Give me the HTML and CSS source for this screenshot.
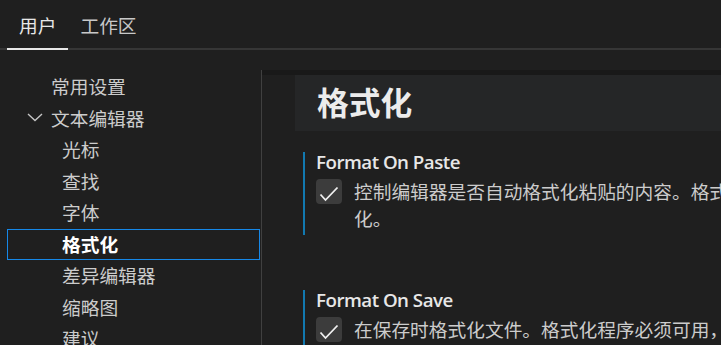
FILE: index.html
```html
<!DOCTYPE html>
<html>

<head>
  <meta charset="utf-8">
  <title>设置</title>
  <link rel="stylesheet" href="styles.css">
</head>

<body>
  <div class="tabs">
    <span class="tab curr">用户</span>
    <span class="tab">工作区</span>
  </div>
  <div class="main">
    <ul class="toc">
      <li class="lv1">常用设置</li>
      <li class="lv1">
        <svg class="chev" width="16" height="10" viewBox="0 0 16 10">
          <polyline points="1,2 8,8.5 15,2" fill="none" stroke="#c5c5c5" stroke-width="1.4" />
        </svg>文本编辑器
      </li>
      <li class="lv2">光标</li>
      <li class="lv2">查找</li>
      <li class="lv2">字体</li>
      <li class="lv2 sel">格式化</li>
      <li class="lv2">差异编辑器</li>
      <li class="lv2">缩略图</li>
      <li class="lv2">建议</li>
    </ul>
    <div class="content">
      <div class="shadow"></div>
      <div class="head">格式化</div>

      <div class="item">
        <div class="title">Format On Paste</div>
        <div class="row">
          <span class="chk">
            <svg width="26" height="25" viewBox="0 0 26 25">
              <polyline points="4.5,15.5 9.5,21 21.5,8.5" fill="none" stroke="#f0f0f0" stroke-width="1.8" />
            </svg>
          </span>
          <div class="desc">
            <p>控制编辑器是否自动格式化粘贴的内容。格式化程序必须可用，并且能针对文档中的某一范围进行格式</p>
            <p>化。</p>
          </div>
        </div>
      </div>

      <div class="item second">
        <div class="title">Format On Save</div>
        <div class="row">
          <span class="chk">
            <svg width="26" height="25" viewBox="0 0 26 25">
              <polyline points="4.5,15.5 9.5,21 21.5,8.5" fill="none" stroke="#f0f0f0" stroke-width="1.8" />
            </svg>
          </span>
          <div class="desc">
            <p>在保存时格式化文件。格式化程序必须可用，延迟后文件不能保存，并且编辑器不能关闭。</p>
          </div>
        </div>
      </div>
    </div>
  </div>
</body>

</html>
```

FILE: styles.css
```css
* {
  margin: 0;
  padding: 0;
}

html,
body {
  height: 100%;
}

body {
  overflow: hidden;
  background: #1f1f1f;
  color: #cccccc;
  font-family: "Open Sans", "Noto Sans CJK SC", sans-serif;
  font-size: 18.72px;
}

li {
  list-style: none;
}

.tabs {
  display: flex;
  height: 48px;
  padding-left: 7px;
  border-bottom: 2px solid #363636;
}

.tab {
  padding: 0 12px;
  line-height: 52px;
  height: 48px;
  color: #c8c8c8;
}

.tab.curr {
  color: #e7e7e7;
  border-bottom: 2px solid #e7e7e7;
}

.main {
  display: flex;
  margin-top: 20px;
  height: calc(100% - 70px);
}

.toc {
  width: 261px;
  flex: none;
  padding-top: 1px;
  border-right: 1px solid #404040;
}

.toc li {
  display: flex;
  align-items: center;
  height: 32px;
  margin: 0 1px 0 7px;
  padding-bottom: 3px;
  white-space: nowrap;
  box-sizing: border-box;
  border: 1px solid transparent;
}

.toc li:nth-child(even) {
  height: 31px;
}

.toc .lv1 {
  padding-left: 43px;
}

.toc .lv2 {
  padding-left: 54px;
}

.toc .chev {
  margin-left: -24px;
  margin-right: 8px;
}

.toc .sel {
  border-color: #1688e8;
  color: #ffffff;
  font-weight: 700;
}

.content {
  flex: 1;
  overflow: hidden;
}

.shadow {
  height: 5px;
  background: #191919;
}

.head {
  margin-left: 33px;
  height: 56px;
  background: #252627;
  padding-left: 22px;
  line-height: 56px;
  font-size: 31.7px;
  font-weight: 700;
  color: #ececec;
  white-space: nowrap;
}

.item {
  margin: 21px 0 0 41px;
  padding: 0 0 3px 11px;
  border-left: 2px solid #1279b0;
}

.item.second {
  margin-top: 55px;
}

.title {
  line-height: 20px;
  font-weight: 600;
  letter-spacing: -0.5px;
  color: #e7e7e7;
  white-space: nowrap;
}

.row {
  display: flex;
  gap: 12px;
  margin-top: 6px;
}

.chk {
  flex: none;
  width: 26px;
  height: 25px;
  margin-top: 1px;
  border-radius: 4px;
  background: #3c3c3c;
}

.chk svg {
  display: block;
}

.desc p {
  line-height: 27px;
  white-space: nowrap;
}
```
